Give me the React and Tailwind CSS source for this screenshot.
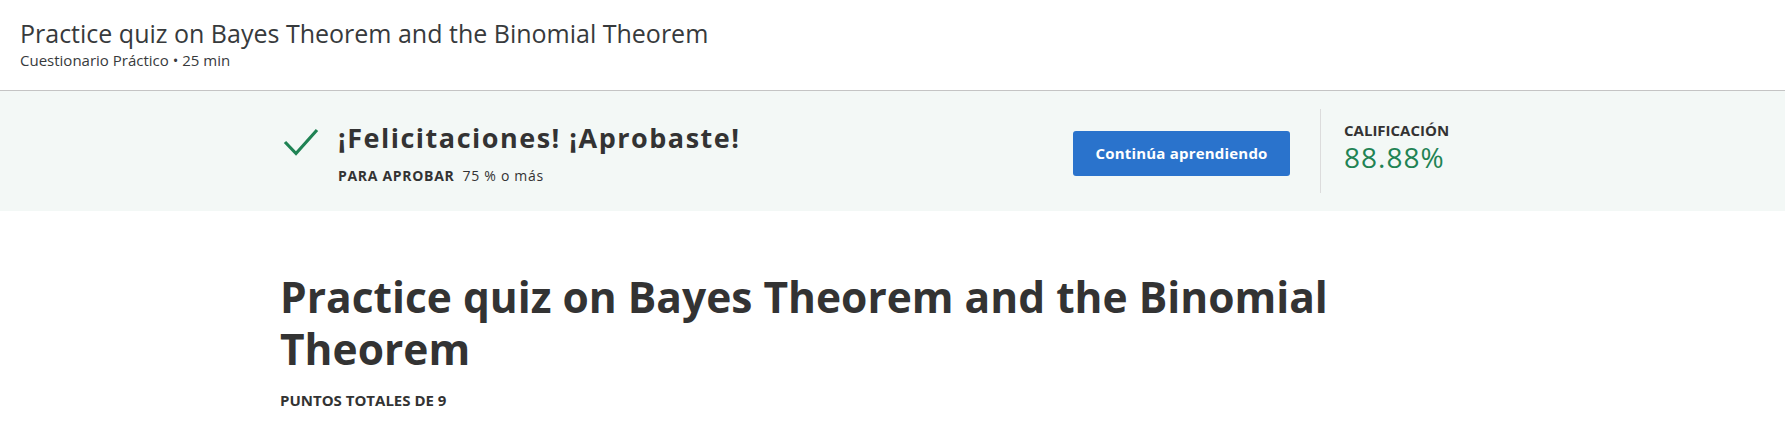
import React from "react";

const CheckMark = () => (
  <svg width="36" height="28" viewBox="0 0 36 28" className="mt-[37px] ml-[3px] shrink-0">
    <polyline points="2,14 13,25.5 34,2" fill="none" stroke="#1f8354" strokeWidth="3.2" />
  </svg>
);

const App = () => {
  return (
    <div className="w-full bg-white text-[#333333]" style={{ fontFamily: '"Open Sans", "Liberation Sans", sans-serif' }}>
      {/* top header */}
      <div className="h-[91px] border-b border-[#c4c4c4] px-[20px] pt-[17px]">
        <h1 className="text-[25px] leading-[32px] font-normal text-[#373a3c]">
          Practice quiz on Bayes Theorem and the Binomial Theorem
        </h1>
        <div className="mt-[1px] text-[15px] leading-[20px] text-[#373a3c]">
          Cuestionario Práctico • 25 min
        </div>
      </div>

      {/* passed banner */}
      <div className="h-[120px] bg-[#f3f8f6]">
        <div className="mx-auto flex h-full w-[1225px] items-start">
          <div className="flex flex-1">
            <CheckMark />
            <div className="ml-[19px] mt-[30px]">
              <div className="text-[27px] leading-[34px] font-bold tracking-[1.5px] text-[#333333]">
                ¡Felicitaciones! ¡Aprobaste!
              </div>
              <div className="mt-[11px] text-[14px] leading-[20px] tracking-[0.7px]">
                <span className="font-bold">PARA APROBAR</span>
                <span className="ml-[8px]">75 % o más</span>
              </div>
            </div>
          </div>
          <button className="mt-[40px] h-[45px] w-[217px] rounded-[3px] bg-[#2a73cc] text-[15px] font-bold tracking-[0.2px] text-white">
            Continúa aprendiendo
          </button>
          <div className="ml-[30px] mt-[18px] h-[84px] w-px bg-[#dcdcdc]" />
          <div className="mt-[29px] w-[184px] pl-[23px]">
            <div className="text-[15px] leading-[20px] font-bold">CALIFICACIÓN</div>
            <div className="text-[28px] leading-[34px] tracking-[1px] text-[#1f8354]">88.88%</div>
          </div>
        </div>
      </div>

      {/* quiz body */}
      <div className="mx-auto w-[1225px] pt-[60px]">
        <h2 className="w-[1100px] text-[42.5px] leading-[52px] font-bold text-[#333333]">
          Practice quiz on Bayes Theorem and the Binomial Theorem
        </h2>
        <div className="mt-[15px] text-[15px] leading-[20px] font-bold">PUNTOS TOTALES DE 9</div>
      </div>
    </div>
  );
};

export default App;
